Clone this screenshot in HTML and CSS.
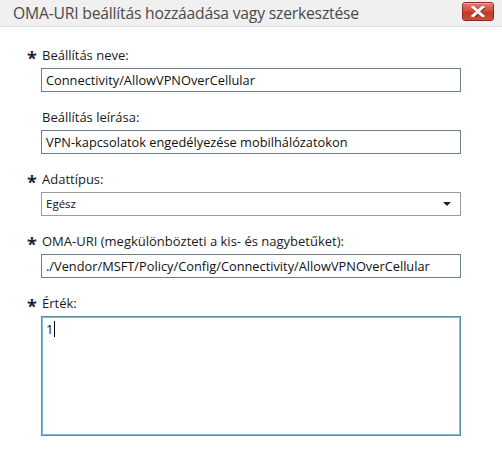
FILE: index.html
```html
<!DOCTYPE html>
<html lang="hu">
<head>
<meta charset="utf-8">
<link rel="stylesheet" href="styles.css">
</head>
<body>
<div class="dialog">
  <div class="titlebar">
    <span class="title">OMA-URI beállítás hozzáadása vagy szerkesztése</span>
    <button class="close" aria-label="Bezárás">
      <svg width="14" height="11" viewBox="0 0 14 11"><path d="M2 1 L12 10 M12 1 L2 10" stroke="#5a1a14" stroke-width="3.4" stroke-linecap="square" transform="translate(0.6 0.6)"/><path d="M2 1 L12 10 M12 1 L2 10" stroke="#fff" stroke-width="3" stroke-linecap="square"/></svg>
    </button>
  </div>
  <div class="form">
    <div class="field">
      <div class="label"><span class="req">*</span>Beállítás neve:</div>
      <div class="input">Connectivity/AllowVPNOverCellular</div>
    </div>
    <div class="field">
      <div class="label"><span class="req"></span>Beállítás leírása:</div>
      <div class="input">VPN-kapcsolatok engedélyezése mobilhálózatokon</div>
    </div>
    <div class="field">
      <div class="label"><span class="req">*</span>Adattípus:</div>
      <div class="input select"><span class="small">Egész</span><span class="arrow"></span></div>
    </div>
    <div class="field">
      <div class="label"><span class="req">*</span>OMA-URI (megkülönbözteti a kis- és nagybetűket):</div>
      <div class="input">./Vendor/MSFT/Policy/Config/Connectivity/AllowVPNOverCellular</div>
    </div>
    <div class="field">
      <div class="label"><span class="req">*</span>Érték:</div>
      <div class="textarea">1<span class="caret"></span></div>
    </div>
  </div>
</div>
</body>
</html>
```
FILE: styles.css
```css
html, body {
  margin: 0;
  padding: 0;
  background: #fff;
}
body {
  font-family: "Open Sans", "Noto Sans", sans-serif;
  color: #1a1a1a;
  width: 502px;
  height: 453px;
  overflow: hidden;
}
.titlebar {
  height: 26px;
  background: #f0f0f0;
  border-bottom: 1px solid #dcdcdc;
  display: flex;
  align-items: center;
  justify-content: space-between;
  padding: 0 8px 0 13px;
}
.title {
  font-size: 15.7px;
  color: #4a4a4a;
  letter-spacing: -0.2px;
  line-height: 26px;
}
.close {
  width: 32px;
  height: 19px;
  margin-top: -3px;
  padding: 0;
  border: 1px solid #8e2a20;
  border-radius: 3px;
  background: linear-gradient(#e6796c 0%, #d4503f 45%, #c23a2a 55%, #d04b39 100%);
  display: flex;
  align-items: center;
  justify-content: center;
  box-shadow: inset 0 1px 0 rgba(255,255,255,0.35);
}
.form {
  padding: 19px 41px 0 27px;
}
.field {
  margin-bottom: 16px;
}
.label {
  display: flex;
  align-items: center;
  height: 18px;
  margin-bottom: 4px;
  font-size: 13px;
  color: #1a1a1a;
}
.req {
  width: 15px;
  font-weight: bold;
  font-size: 18px;
  color: #1c1c3a;
  line-height: 18px;
  padding-top: 3px;
  height: 18px;
  box-sizing: border-box;
}
.input {
  margin-left: 14px;
  height: 24px;
  box-sizing: border-box;
  border: 1px solid #6e7f8c;
  padding: 0 4px;
  font-size: 12.8px;
  line-height: 22px;
  color: #111;
  white-space: nowrap;
  overflow: hidden;
}
.select {
  border-color: #9a9a9a;
  display: flex;
  align-items: center;
  justify-content: space-between;
  padding-right: 9px;
}
.small {
  font-size: 11.5px;
}
.arrow {
  width: 0;
  height: 0;
  border-left: 4px solid transparent;
  border-right: 4px solid transparent;
  border-top: 4px solid #222;
}
.textarea {
  margin-left: 14px;
  height: 120px;
  box-sizing: border-box;
  border: 1px solid #5e8fa3;
  box-shadow: inset 0 0 0 1px #78c0d6;
  padding: 3px 4px;
  font-size: 13px;
  line-height: 18px;
  color: #111;
}
.caret {
  display: inline-block;
  width: 1px;
  height: 16px;
  background: #000;
  vertical-align: -3px;
  margin-left: 1px;
}
```
